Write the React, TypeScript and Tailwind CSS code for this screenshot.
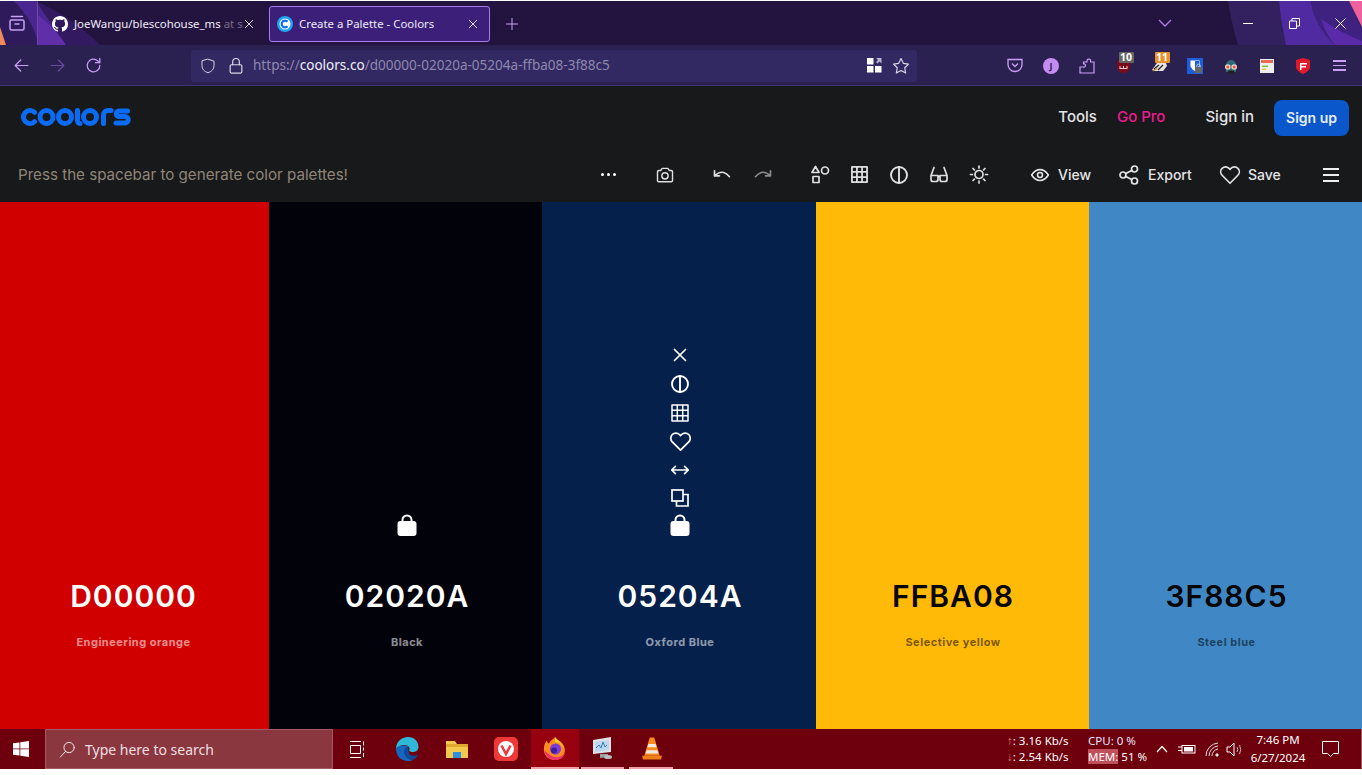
import React from "react";

type P = { className?: string; size?: number; sw?: number; children?: React.ReactNode; vb?: string };
const Ic = ({ className = "", size = 20, sw = 1.6, children, vb = "0 0 24 24" }: P) => (
  <svg width={size} height={size} viewBox={vb} fill="none" stroke="currentColor" strokeWidth={sw} strokeLinecap="round" strokeLinejoin="round" className={className}>
    {children}
  </svg>
);

const Grid = ({ size = 18, sw = 1.9 }: { size?: number; sw?: number }) => (
  <Ic size={size} sw={sw} vb="0 0 18 18"><g strokeLinecap="butt"><rect x="1" y="1" width="16" height="16" /><path d="M6.3 1v16M11.7 1v16M1 6.3h16M1 11.7h16" /></g></Ic>
);
const Contrast = ({ size = 18, sw = 1.9 }: { size?: number; sw?: number }) => (
  <Ic size={size} sw={sw} vb="0 0 18 18"><circle cx="9" cy="9" r="8" /><path d="M9 1v16" /></Ic>
);
const Heart = ({ size = 22, sw = 1.8 }: { size?: number; sw?: number }) => (
  <Ic size={size} sw={sw}><path d="M12 21 3.4 12.3a5.4 5.4 0 0 1 0-7.6 5.3 5.3 0 0 1 7.5 0L12 5.9l1.1-1.2a5.3 5.3 0 0 1 7.5 0 5.4 5.4 0 0 1 0 7.6Z" /></Ic>
);
const Lock = () => (
  <svg width="20" height="22" viewBox="0 0 20 22" fill="white">
    <path d="M5.5 8V6a4.500 4.500 0 0 1 9 0v2" fill="none" stroke="white" strokeWidth="2" />
    <rect x="0.5" y="7" width="19" height="15" rx="3" />
  </svg>
);

const Tab = ({ active, icon, title }: { active?: boolean; icon: React.ReactNode; title: React.ReactNode }) => (
  <div className={`flex h-[36px] items-center rounded-[3px] ${active ? "w-[221px] border border-[#a57cf0] bg-[#3b1f78] pl-[7px]" : "w-[225px] pl-[12px]"}`}>
    {icon}
    <div className="ml-[6px] min-w-0 flex-1 whitespace-nowrap text-[11.4px] text-[#f0ecf8]">{title}</div>
    <svg width="10" height="10" viewBox="0 0 10 10" className="mr-[11px] text-[#ddd]" stroke="currentColor" fill="none"><path d="M1 1l8 8M9 1l-8 8" /></svg>
  </div>
);

const Slot = ({ children, w = "w-[36px]" }: { children: React.ReactNode; w?: string }) => (
  <div className={`${w} flex h-full shrink-0 items-center justify-center`}>{children}</div>
);

const Badge = ({ n, c }: { n: string; c: string }) => (
  <span className={`absolute top-[-6px] rounded-[1px] px-[1.500px] text-[10.5px] font-bold leading-[11px] text-white ${c}`}>{n}</span>
);

const Tool = ({ icon, label, w, gap }: { icon: React.ReactNode; label: string; w: string; gap: string }) => (
  <div className={`${w} ${gap} flex shrink-0 items-center text-[14px] font-medium text-[#e4e5e7]`}>
    {icon}
    <span>{label}</span>
  </div>
);

const Col = ({ bg, w, off, hex, name, dark, children }: { bg: string; w: string; off: string; hex: string; name: string; dark?: boolean; children?: React.ReactNode }) => (
  <div className={`${bg} ${w} ${off} flex h-full shrink-0 flex-col items-center justify-end pb-[80px]`}>
    {children}
    <div className={`mt-[40px] text-[30px] font-semibold leading-[40px] tracking-[1px] ${dark ? "text-[#050505]" : "text-white"}`}>{hex}</div>
    <div className={`mt-[19px] text-[11px] font-bold leading-[14px] tracking-[0.5px] ${dark ? "text-black/55" : "text-white/55"}`}>{name}</div>
  </div>
);

const Cell = ({ children }: { children: React.ReactNode }) => (
  <div className="flex h-[20px] items-center justify-center">{children}</div>
);

export default function App() {
  return (
    <div className="flex h-[775px] w-[1362px] flex-col overflow-hidden bg-white pt-px font-['Inter',sans-serif]">
      {/* tab strip */}
      <div className="relative flex h-[44px] shrink-0 items-center overflow-hidden bg-[#23133f] font-['Noto_Sans',sans-serif]">
        <svg className="absolute inset-0" width="1362" height="44" viewBox="0 0 1362 44">
          <path d="M0 0h36Q72 16 100 44H0Z" fill="#33195f" />
          <path d="M0 0h36Q52 24 66 44H0Z" fill="#4a2690" />
          <path d="M0 0h14Q34 20 38 44H0Z" fill="#2f1a5c" />
          <path d="M38 14Q56 28 66 44H38Z" fill="#5f2ea8" />
          <path d="M0 26l6 18H0Z" fill="#f08a5d" />
          <path d="M1228 0h134v44h-124Q1231 20 1228 0Z" fill="#33205f" />
          <path d="M1279 0h32q3 24 24 44h-49Q1281 22 1279 0Z" fill="#4f2aa0" />
          <path d="M1311 0h38q8 20 13 28v16h-27Q1314 24 1311 0Z" fill="#3f2280" />
          <path d="M1335 44q-10-12-14-26 20 14 41 22v4Z" fill="#5a2aa8" />
          <path d="M1349 0h13v26Q1356 14 1349 0Z" fill="#f0609f" />
        </svg>
        <div className="relative flex h-full w-[38px] shrink-0 items-center justify-center border-r border-[#6a4aa0] pr-[4px] text-[#c9a0f5]">
          <Ic size={18} sw={1.5} vb="0 0 18 18"><rect x="2" y="6" width="14" height="10" rx="1.5" /><path d="M3.5 2.500h11M7 10h4" /></Ic>
        </div>
        <div className="relative flex items-center pl-[2px] pt-px">
          <Tab icon={
            <svg width="16" height="16" viewBox="0 0 16 16" fill="white"><path d="M8 0C3.58 0 0 3.58 0 8c0 3.54 2.29 6.53 5.47 7.59.4.07.55-.17.55-.38 0-.19-.01-.82-.01-1.49-2.01.37-2.53-.49-2.69-.94-.09-.23-.48-.94-.82-1.13-.28-.15-.68-.52-.01-.53.63-.01 1.08.58 1.23.82.72 1.21 1.87.87 2.33.66.07-.52.28-.87.51-1.07-1.78-.2-3.64-.89-3.64-3.95 0-.87.31-1.59.82-2.15-.08-.2-.36-1.02.08-2.12 0 0 .67-.21 2.2.82.64-.18 1.32-.27 2-.27s1.36.09 2 .27c1.53-1.04 2.2-.82 2.2-.82.44 1.1.16 1.92.08 2.12.51.56.82 1.27.82 2.15 0 3.07-1.87 3.75-3.65 3.95.29.25.54.73.54 1.48 0 1.07-.01 1.93-.01 2.2 0 .21.15.46.55.38A8.01 8.01 0 0 0 16 8c0-4.42-3.58-8-8-8Z" /></svg>
          } title={<>JoeWangu/blescohouse_ms <span className="opacity-40">at s</span></>} />
          <div className="w-[4px]" />
          <Tab active icon={
            <svg width="16" height="16" viewBox="0 0 16 16"><circle cx="8" cy="8" r="8" fill="#1ea3f5" /><circle cx="8" cy="8" r="5.5" fill="white" /><path d="M10.6 5.7a3.4 3.4 0 1 0 0 4.6" fill="none" stroke="#0d6bf0" strokeWidth="2.2" /></svg>
          } title="Create a Palette - Coolors" />
          <div className="flex w-[44px] justify-center text-[#c9a0f5]">
            <svg width="12" height="12" viewBox="0 0 12 12" stroke="currentColor" strokeWidth="1"><path d="M6 0v12M0 6h12" /></svg>
          </div>
        </div>
        <div className="relative ml-auto mr-[-1px] flex h-full items-center">
          <Slot w="w-[24px]"><svg width="14" height="8" viewBox="0 0 14 8" fill="none" stroke="#b07ee8" strokeWidth="1.3"><path d="M1 1l6 6 6-6" /></svg></Slot>
          <div className="w-[48px]" />
          <Slot w="w-[46px]"><span className="h-px w-[10px] bg-white" /></Slot>
          <Slot w="w-[46px]"><svg width="11" height="11" viewBox="0 0 11 11" fill="none" stroke="white"><path d="M.5 3h7v7.500h-7ZM3 3V.5h7.500V8H8" /></svg></Slot>
          <Slot w="w-[46px]"><svg width="11" height="11" viewBox="0 0 11 11" fill="none" stroke="white"><path d="M.5.5l10 10M10.500.5l-10 10" /></svg></Slot>
        </div>
      </div>

      {/* toolbar */}
      <div className="flex h-[41px] shrink-0 items-center border-b border-[#3e3570] bg-[#2b2150] pt-px font-['Noto_Sans',sans-serif]">
        <div className="flex h-full w-[191px] shrink-0 items-center pl-[3px]">
          <Slot><Ic size={19} sw={1.5} className="text-[#c9a0f5]"><path d="M20 12H4M11 5l-7 7 7 7" /></Ic></Slot>
          <Slot><Ic size={19} sw={1.5} className="text-[#6a4a9e]"><path d="M4 12h16M13 5l7 7-7 7" /></Ic></Slot>
          <Slot><Ic size={19} sw={1.6} className="text-[#c9a0f5]"><path d="M20 12a8 8 0 1 1-2.500-5.800L20 8.500M20 3v5.500h-5.500" /></Ic></Slot>
        </div>
        <div className="flex h-[32px] w-[726px] shrink-0 items-center rounded-[4px] bg-[#322963] pl-[8px]">
          <Slot w="w-[18px]"><Ic size={20} sw={1.3} className="text-[#dcd8e8]"><path d="M12 3l8 2.500v6c0 5-3.500 8-8 9.500-4.500-1.500-8-4.500-8-9.500v-6Z" /></Ic></Slot>
          <Slot w="w-[38px]"><Ic size={20} sw={1.4} className="text-[#dcd8e8]"><rect x="5" y="10.500" width="14" height="10" rx="1.500" /><path d="M8 10.500V7a4 4 0 0 1 8 0v3.500" /></Ic></Slot>
          <div className="ml-[-2px] text-[13.55px] text-[#8e87ad]">https://<span className="text-[#f2f0f8]">coolors.co</span>/d00000-02020a-05204a-ffba08-3f88c5</div>
          <div className="ml-auto flex h-full items-center pr-[2px]">
            <svg width="15" height="15" viewBox="0 0 15 15" fill="white" className="mr-[5px]"><rect width="6.500" height="6.500" /><rect y="8" width="6.500" height="6.500" /><rect x="8" y="8" width="6.500" height="6.500" /><path d="M9 0h5.500v5.500l-2-2-2 2-1.500-1.500 2-2Z" fill="#b8b4cc" /></svg>
            <Slot w="w-[28px]"><Ic size={20} sw={1.4} className="text-[#dcd8e8]"><path d="M12 3l2.800 5.800 6.200.900-4.500 4.400 1.100 6.300L12 17.400l-5.600 3 1.100-6.300L3 9.700l6.200-.900Z" /></Ic></Slot>
          </div>
        </div>
        <div className="ml-auto flex h-full items-center pr-[5px]">
          <Slot><svg width="16" height="15" viewBox="0 0 16 15" fill="none" stroke="#c9a0f5" strokeWidth="1.300"><path d="M1 1.500h14v5a7 7 0 0 1-14 0Z" /><path d="M5 5.500l3 3 3-3" /></svg></Slot>
          <Slot><span className="flex h-[16px] w-[16px] items-center justify-center rounded-full bg-[#c48cf0] text-[9px] font-bold text-[#2b2150]">J</span></Slot>
          <Slot><svg width="16" height="16" viewBox="0 0 16 16" fill="none" stroke="#c9a0f5" strokeWidth="1.200"><path d="M1 15V9h3.200a1.700 1.700 0 1 0 0-3.200H4.500V4H8V3a1.800 1.800 0 0 1 3.600 0v1H15v11Z" /></svg></Slot>
          <Slot>
            <div className="relative flex">
              <svg width="15" height="16" viewBox="0 0 15 16"><path d="M1 2h13v8q-1.500 4-6.500 5.500Q2.500 14 1 10Z" fill="#7a0a1a" /><path d="M4 8v2.500h7V8M7.500 8v2.500" stroke="#e8c8c8" strokeWidth="1.100" fill="none" /></svg>
              <Badge n="10" c="left-[3px] bg-[#666]" />
            </div>
          </Slot>
          <Slot>
            <div className="relative flex">
              <svg width="17" height="16" viewBox="0 0 17 16"><path d="M1 12 6 5h9l1 3-4 5H3Z" fill="#e8e4e0" /><path d="M3 11l5-4M7 12l5-5" stroke="#222" strokeWidth="1.300" /><path d="M2 13l4-3" stroke="#c47a2a" strokeWidth="1.300" /></svg>
              <Badge n="11" c="left-[4px] bg-[#e8922e]" />
            </div>
          </Slot>
          <Slot>
            <svg width="16" height="16" viewBox="0 0 16 16"><rect width="16" height="16" fill="#1d5fd8" /><path d="M3.500 2.500h9V9L9 13.500q-4-1.500-5.500-5Z" fill="white" /><path d="M8 3h4v5l-4 4Z" fill="#1d5fd8" /><rect x="8" y="9" width="7" height="6" rx="1" fill="#666" /><path d="M9.800 9V7.800a1.700 1.700 0 0 1 3.400 0V9" stroke="#ccc" fill="none" /></svg>
          </Slot>
          <Slot>
            <svg width="16" height="16" viewBox="0 0 16 16"><path d="M3 7a5 5 0 0 1 10 0v7H3Z" fill="#2e6a78" /><circle cx="4.800" cy="9" r="2.800" fill="#e8d8c8" /><circle cx="11.200" cy="9" r="2.800" fill="#e8d8c8" /><circle cx="4.800" cy="9" r="1.500" fill="#e05a3a" /><circle cx="11.200" cy="9" r="1.500" fill="#e05a3a" /><rect x="5" y="12.500" width="6" height="3" fill="#222" /></svg>
          </Slot>
          <Slot>
            <svg width="14" height="14" viewBox="0 0 14 14"><rect width="14" height="14" fill="#eee" /><rect x="1" y="1" width="12" height="3" fill="#ea6a5a" /><rect x="2" y="6.500" width="6" height="1.500" fill="#7cc04a" /><rect x="2" y="9.500" width="4" height="1.500" fill="#e8c840" /></svg>
          </Slot>
          <Slot>
            <svg width="14" height="16" viewBox="0 0 14 16"><path d="M0 2 7 0l7 2v8q-2 4-7 6-5-2-7-6Z" fill="#e01a2b" /><path d="M4 5h7v1.500H5.500V8H10v1.500H5.500V12H4Z" fill="white" /></svg>
          </Slot>
          <Slot><span className="flex w-[13px] flex-col gap-[3px]"><span className="h-[1.500px] bg-[#c9a0f5]" /><span className="h-[1.500px] bg-[#c9a0f5]" /><span className="h-[1.500px] bg-[#c9a0f5]" /></span></Slot>
        </div>
      </div>

      {/* coolors header */}
      <div className="flex h-[64px] shrink-0 items-center bg-[#18191b] pb-[1px] pl-[20px] pr-[13px]">
        <svg width="111" height="18" viewBox="0 0 111 18" fill="none" stroke="#0a6cf5" strokeWidth="5" strokeLinecap="round" className="mt-[-2px]">
          <path d="M14.500 4.300A6.500 6.500 0 1 0 14.500 13.700" />
          <circle cx="26.500" cy="9" r="6.500" />
          <circle cx="45" cy="9" r="6.500" />
          <path d="M57.500 2.500v10.500a2.500 2.500 0 0 0 2.500 2.500" />
          <circle cx="70" cy="9" r="6.500" />
          <path d="M83.500 15.500V7a4.500 4.500 0 0 1 4.500-4.500h3" />
          <path d="M107.500 3H99a2.750 2.750 0 0 0 0 5.500h6a2.750 2.750 0 0 1 0 6.500h-9" />
        </svg>
        <div className="ml-auto flex items-center text-[15px] font-medium">
          <span className="text-[#e4e5e7]">Tools</span>
          <span className="ml-[20px] text-[#ec1c8e]">Go Pro</span>
          <span className="ml-[40px] text-[#e4e5e7]">Sign in</span>
          <span className="ml-[20px] flex h-[36px] w-[75px] items-center justify-center rounded-[8px] bg-[#0a57cc] text-[14px] font-semibold text-[#e6edf8]">Sign up</span>
        </div>
      </div>
      <div className="flex h-[52px] shrink-0 items-center bg-[#18191b] pb-[3px] pl-[18px] pr-[23px]">
        <span className="mt-[1px] text-[15.15px] text-[#8f8678]">Press the spacebar to generate color palettes!</span>
        <div className="ml-auto flex items-center text-[#dfe0e2]">
          <Slot w="w-[20px]"><span className="flex gap-[3px]"><span className="h-[3px] w-[3px] rounded-full bg-white" /><span className="h-[3px] w-[3px] rounded-full bg-white" /><span className="h-[3px] w-[3px] rounded-full bg-white" /></span></Slot>
          <div className="w-[37px]" />
          <Slot w="w-[20px]"><Ic size={24} sw={1.700}><path d="M3 8a1.500 1.500 0 0 1 1.500-1.500H7L8.500 4h7L17 6.500h2.500A1.500 1.500 0 0 1 21 8v10.500a1.500 1.500 0 0 1-1.500 1.500h-15A1.500 1.500 0 0 1 3 18.500Z" /><circle cx="12" cy="13" r="3.800" /></Ic></Slot>
          <div className="w-[37px]" />
          <Slot w="w-[20px]"><Ic size={24} sw={2}><path d="M3 7v6h6M3 13q6-5.500 11-4 4 1.300 7 5" /></Ic></Slot>
          <div className="w-[21px]" />
          <Slot w="w-[20px]"><Ic size={24} sw={2} className="text-[#8b8c8e]"><path d="M21 7v6h-6M21 13q-6-5.500-11-4-4 1.300-7 5" /></Ic></Slot>
          <div className="w-[37px]" />
          <Slot w="w-[20px]"><Ic size={21} sw={1.700} vb="0 0 20 20"><path d="M5.500 2 9 8H2Z" /><circle cx="15" cy="6" r="3.500" /><rect x="3" y="12" width="6" height="6" /></Ic></Slot>
          <div className="w-[19px]" />
          <Slot w="w-[20px]"><Grid size={17} /></Slot>
          <div className="w-[20px]" />
          <Slot w="w-[20px]"><Contrast size={18} /></Slot>
          <div className="w-[20px]" />
          <Slot w="w-[20px]"><Ic size={21} sw={1.700} vb="0 0 20 20"><path d="M5 3 2 11v4a2 2 0 0 0 2 2h3a2 2 0 0 0 2-2v-4H2M15 3l3 8v4a2 2 0 0 1-2 2h-3a2 2 0 0 1-2-2v-4h7M9 12h2" /></Ic></Slot>
          <div className="w-[20px]" />
          <Slot w="w-[20px]"><Ic size={21} sw={1.700} vb="0 0 20 20"><circle cx="10" cy="10" r="4" /><path d="M10 1.500v2M10 16.500v2M1.500 10h2M16.500 10h2M4 4l1.400 1.400M14.600 14.600 16 16M4 16l1.400-1.400M14.600 5.400 16 4" /></Ic></Slot>
          <div className="w-[41px]" />
          <Tool w="w-[89px]" gap="gap-[8px]" label="View" icon={<Ic size={20} sw={1.900}><path d="M2 12q4-6.500 10-6.500T22 12q-4 6.500-10 6.500T2 12Z" /><circle cx="12" cy="12" r="3" /></Ic>} />
          <Tool w="w-[100px]" gap="gap-[9px]" label="Export" icon={<Ic size={20} sw={1.700} vb="0 0 20 20"><circle cx="4" cy="10" r="3" /><circle cx="15.500" cy="4" r="3" /><circle cx="15.500" cy="16" r="3" /><path d="M6.700 8.600 12.800 5.400M6.700 11.400l6.100 3.200" /></Ic>} />
          <Tool w="w-[104px]" gap="gap-[7px]" label="Save" icon={<Heart />} />
          <span className="flex w-[16px] flex-col gap-[4px]"><span className="h-[2px] bg-[#eee]" /><span className="h-[2px] bg-[#eee]" /><span className="h-[2px] bg-[#eee]" /></span>
        </div>
      </div>

      {/* palette */}
      <div className="flex h-[527px] shrink-0">
        <Col bg="bg-[#d00000]" w="w-[269px]" off="pr-[2px]" hex="D00000" name="Engineering orange" />
        <Col bg="bg-[#02020a]" w="w-[273px]" off="pl-[3px]" hex="02020A" name="Black"><Lock /></Col>
        <Col bg="bg-[#05204a]" w="w-[274px]" off="pl-[2px]" hex="05204A" name="Oxford Blue">
          <div className="flex flex-col items-center gap-[8.600px] text-white">
            <Cell><Ic size={22} sw={1.900}><path d="M6 6l12 12M18 6 6 18" /></Ic></Cell>
            <Cell><Contrast size={18} /></Cell>
            <Cell><Grid size={18} sw={1.500} /></Cell>
            <Cell><Heart size={23} sw={1.800} /></Cell>
            <Cell><Ic size={22} sw={1.900}><path d="M3 12h18M7 8l-4 4 4 4M17 8l4 4-4 4" /></Ic></Cell>
            <Cell><svg width="18" height="18" viewBox="0 0 18 18" fill="none" stroke="white" strokeWidth="1.700"><rect x="1" y="1" width="11" height="11" /><path d="M12 5.500h5V17H5.500v-5" /></svg></Cell>
            <div className="mt-[-3px]"><Lock /></div>
          </div>
        </Col>
        <Col bg="bg-[#ffba08]" w="w-[273px]" off="pl-[1px]" hex="FFBA08" name="Selective yellow" dark />
        <Col bg="bg-[#3f88c5]" w="w-[273px]" off="pl-[2px]" hex="3F88C5" name="Steel blue" dark />
      </div>

      {/* taskbar */}
      <div className="flex h-[40px] shrink-0 items-stretch bg-[#6d000c] font-['Noto_Sans',sans-serif] text-white">
        <div className="flex w-[45px] shrink-0 items-center justify-center pr-[3px]">
          <svg width="16" height="16" viewBox="0 0 16 16" fill="white"><path d="M0 2.300 6.500 1.400v6.100H0ZM7.300 1.300 16 0v7.500H7.300ZM0 8.300h6.500v6.300L0 13.700ZM7.300 8.300H16V16l-8.700-1.200Z" /></svg>
        </div>
        <div className="flex w-[288px] shrink-0 items-center border border-[#a45a62] bg-[#8b3740] pl-[12px] text-[14px] text-[#f0dfe0]">
          <Ic size={19} sw={1.100} className="text-white"><circle cx="14" cy="9.500" r="6.500" /><path d="M9.500 14.500 3 21.500" /></Ic>
          <span className="ml-[8px]">Type here to search</span>
        </div>
        <Slot w="w-[49px]"><svg width="17" height="17" viewBox="0 0 17 17" fill="none" stroke="white"><path d="M1 .500h11M1 16.500h11M1.500 4.500h10v8h-10Z" /><path d="M14.500.500v4M14.500 6.500v3M14.500 12v4" /></svg></Slot>
        <Slot w="w-[50px]"><svg width="24" height="26" viewBox="0 0 24 26"><path d="M1 13C1 6 6 1 13 1c6 0 10.500 4 10.500 10 0 3-2.500 5-6 5-2.500 0-4-1-3-3 .5-1-1-4-5-4-5 0-7.500 3-8.500 4Z" fill="#2fb8d8" /><path d="M1 13c0 7 5 12 12 12 2 0 4-.5 5.500-1.500-5 .5-9-3-9-7.500 0-3 2-5 4-5.500C10 9 2.500 9 1 13Z" fill="#1468c0" /><path d="M13.500 10.500C12 11 9.500 13 9.500 16c0 4.500 4 8 9 7.500 2-1 4-3 4.500-5-3 2-7 1.500-8.500-.5-1-1.500-1.500-5-1-7.500Z" fill="#0c4a9e" /></svg></Slot>
        <Slot w="w-[49px]"><svg width="24" height="20" viewBox="0 0 24 20"><path d="M1 2h9l2 3h11v14H1Z" fill="#f2c94c" /><rect x="1" y="5" width="22" height="3" fill="#e0a92e" /><rect x="8" y="13" width="8" height="6" fill="#2f8fdc" /></svg></Slot>
        <Slot w="w-[49px]"><svg width="24" height="24" viewBox="0 0 24 24"><rect width="24" height="24" rx="5" fill="#ef3939" /><circle cx="12" cy="12" r="8" fill="white" /><path d="M7.500 8.500 12 17l4.500-8.500" stroke="#ef3939" strokeWidth="2.500" fill="none" /></svg></Slot>
        <div className="w-[1px]" />
        <div className="flex w-[48px] shrink-0 items-center justify-center border-b-[2px] border-[#f0a0a8] bg-[#97000f]">
          <svg width="24" height="25" viewBox="0 0 24 24"><path d="M12 .5c1 3 6 3 9 9 3 7-2 14-9 14S0 18 1 11c0-3 2-6 3-7 0 2 1 3 2 3 1-3 4-4 6-6.500Z" fill="#ff8a1e" /><path d="M12 .5c2 3 7 5 8 10-3-4-5-5-8-5Z" fill="#ffd22e" /><circle cx="12.500" cy="12.500" r="5.500" fill="#7a3ddb" /><circle cx="11" cy="14" r="3" fill="#3d1f99" /><path d="M1.500 14c1 7 7 9.500 11 9.500 4 0 8-2 9.500-7-3 4-8 5-12 3.500-4-1.500-6-4-8.500-6Z" fill="#f0316e" /></svg>
        </div>
        <div className="w-[2px]" />
        <div className="flex w-[43px] shrink-0 items-center justify-center border-b-[2px] border-[#f0a0a8]">
          <svg width="24" height="24" viewBox="0 0 24 24"><path d="M2 4 20 1v15L2 18Z" fill="#dfe3e6" /><path d="M4 6l14-2v10L4 16Z" fill="#bcd8ee" /><path d="M5 12l3-3 2 3 2-6 2 5 2-2" stroke="#3a7ac0" fill="none" /><path d="M9 18h8v3l-8 1Z" fill="#9aa0a6" /><ellipse cx="17" cy="21" rx="4" ry="2" fill="#b8bcc0" /></svg>
        </div>
        <div className="w-[5px]" />
        <div className="flex w-[44px] shrink-0 items-center justify-center border-b-[2px] border-[#f0a0a8] pl-[1px]">
          <svg width="20" height="25" viewBox="0 0 22 26"><path d="M8.500 1h5l6 20H2.500Z" fill="#f58a1f" /><path d="M7 8h8l1 3.500H6ZM5 15h12l1 3.500H4Z" fill="#f0ebe0" /><path d="M0 21h22l-1 4H1Z" fill="#ef7f1a" /></svg>
        </div>
        <div className="ml-auto flex items-center text-[11.5px] leading-[16px]">
          <div className="w-[81px] shrink-0">
            <div><span className="text-[#ff8a8a]">↑</span>: 3.16 Kb/s</div>
            <div><span className="text-[#ff8a8a]">↓</span>: 2.54 Kb/s</div>
          </div>
          <div className="w-[63px] shrink-0">
            <div className="text-[#e6e6ff]">CPU: 0 %</div>
            <div><span className="bg-[#c0505c]">MEM:</span> 51 %</div>
          </div>
          <Slot w="w-[22px]"><svg width="12" height="8" viewBox="0 0 12 8" fill="none" stroke="white" strokeWidth="1.200"><path d="M1 7l5-5.500L11 7" /></svg></Slot>
          <Slot w="w-[28px]"><svg width="18" height="12" viewBox="0 0 18 12" fill="white"><rect x="4" y="2.500" width="13" height="7.500" fill="none" stroke="white" /><rect x="6" y="4" width="9" height="4.500" /><path d="M0 4h4M0 7.500h4" stroke="white" /></svg></Slot>
          <Slot w="w-[24px]"><svg width="16" height="15" viewBox="0 0 16 15" fill="none" stroke="#ddd"><path d="M1 14A13 13 0 0 1 13 1M4 14a10 10 0 0 1 9-10M7 14a7 7 0 0 1 6-7" /><circle cx="12" cy="13" r="1.200" fill="white" /></svg></Slot>
          <Slot w="w-[20px]"><svg width="18" height="15" viewBox="0 0 18 15" fill="none" stroke="white"><path d="M1 5h3l4-4v13l-4-4H1Z" /><path d="M11 5q1.500 2.500 0 5M13.500 3q2.500 4.500 0 9" stroke="#bbb" /></svg></Slot>
          <div className="flex w-[66px] shrink-0 flex-col items-center leading-[18px]">
            <div>7:46 PM</div>
            <div>6/27/2024</div>
          </div>
          <Slot w="w-[38px]"><svg width="17" height="16" viewBox="0 0 17 16" fill="none" stroke="white"><path d="M.5.500h16v12h-5l-3 3-3-3h-5Z" /></svg></Slot>
          <div className="h-full w-[13px] border-r border-[#a06068]" />
        </div>
      </div>
    </div>
  );
}
